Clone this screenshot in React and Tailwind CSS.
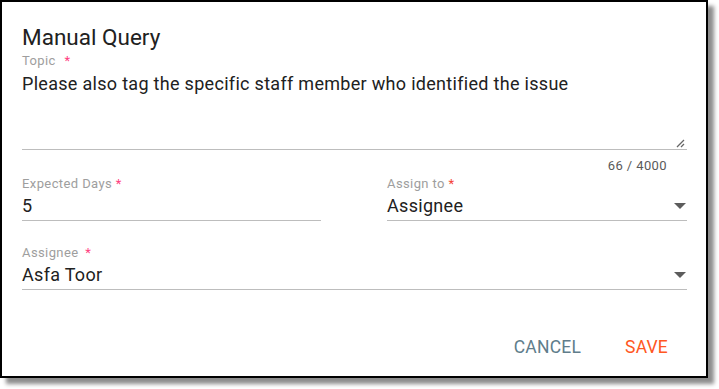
export default function App() {
    const Arrow = () => (
        <svg width="12" height="6" viewBox="0 0 12 6" className="mt-[8px] mr-[1px]">
            <path d="M0 0 L12 0 L6 6 Z" fill="#5c5c5c" />
        </svg>
    )

    const Label = ({ children, star = '#ff4081', gap = 'ml-[2px]' }) => (
        <label className="block text-[13px] leading-[16px] tracking-[0.4px] text-[#9e9e9e]">
            {children} <span className={`${gap}`} style={{ color: star }}>*</span>
        </label>
    )

    return (
        <div className="w-[719px] h-[389px] bg-white font-['Roboto',sans-serif]">
            <div className="w-[708px] h-[378px] border-2 border-black bg-white shadow-[6px_6px_4px_rgba(0,0,0,0.45)] pl-5 pr-[19px] pt-[21px] flex flex-col">
                {/* Title */}
                <h2 className="text-[22.5px] leading-[28px] text-[#212121]">Manual Query</h2>

                {/* Topic textarea */}
                <div className="mt-[2px]">
                    <Label gap="ml-[5px]">Topic</Label>
                    <div className="relative border-b border-[#bdbdbd] h-[81px] pt-[3px]">
                        <p className="text-[18px] leading-[24px] tracking-[0.3px] text-[#212121]">
                            Please also tag the specific staff member who identified the issue
                        </p>
                        <svg width="9" height="9" viewBox="0 0 9 9" className="absolute right-[2px] bottom-[1px]">
                            <path d="M8 1 L1 8 M8 5 L5 8" stroke="#666" strokeWidth="1.3" />
                        </svg>
                    </div>
                    <div className="text-[13px] leading-[16px] tracking-[0.4px] text-[#5a5a5a] text-right pr-[20px] mt-[8px]">66 / 4000</div>
                </div>

                {/* Expected Days + Assign to */}
                <div className="flex justify-between mt-[2px]">
                    <div className="w-[299px]">
                        <Label gap="ml-0">Expected Days</Label>
                        <div className="mt-[3px] border-b border-[#bdbdbd] h-[26px]">
                            <span className="text-[18px] leading-[22px] text-[#212121]">5</span>
                        </div>
                    </div>
                    <div className="w-[300px]">
                        <Label star="#f44336" gap="ml-0">Assign to</Label>
                        <div className="mt-[3px] border-b border-[#bdbdbd] h-[26px] flex items-start justify-between">
                            <span className="text-[18px] leading-[22px] tracking-[0.3px] text-[#212121]">Assignee</span>
                            <Arrow />
                        </div>
                    </div>
                </div>

                {/* Assignee */}
                <div className="mt-[24px]">
                    <Label gap="ml-[3px]">Assignee</Label>
                    <div className="mt-[3px] border-b border-[#bdbdbd] h-[26px] flex items-start justify-between">
                        <span className="text-[18px] leading-[22px] tracking-[0.3px] text-[#212121]">Asfa Toor</span>
                        <Arrow />
                    </div>
                </div>

                {/* Actions */}
                <div className="flex justify-end gap-[44px] mt-[47px] pr-[19px]">
                    <button className="text-[17.5px] leading-[20px] tracking-[0.2px] text-[#607d8b] uppercase">Cancel</button>
                    <button className="text-[17.5px] leading-[20px] tracking-[0.2px] text-[#ff5722] uppercase">Save</button>
                </div>
            </div>
        </div>
    )
}
